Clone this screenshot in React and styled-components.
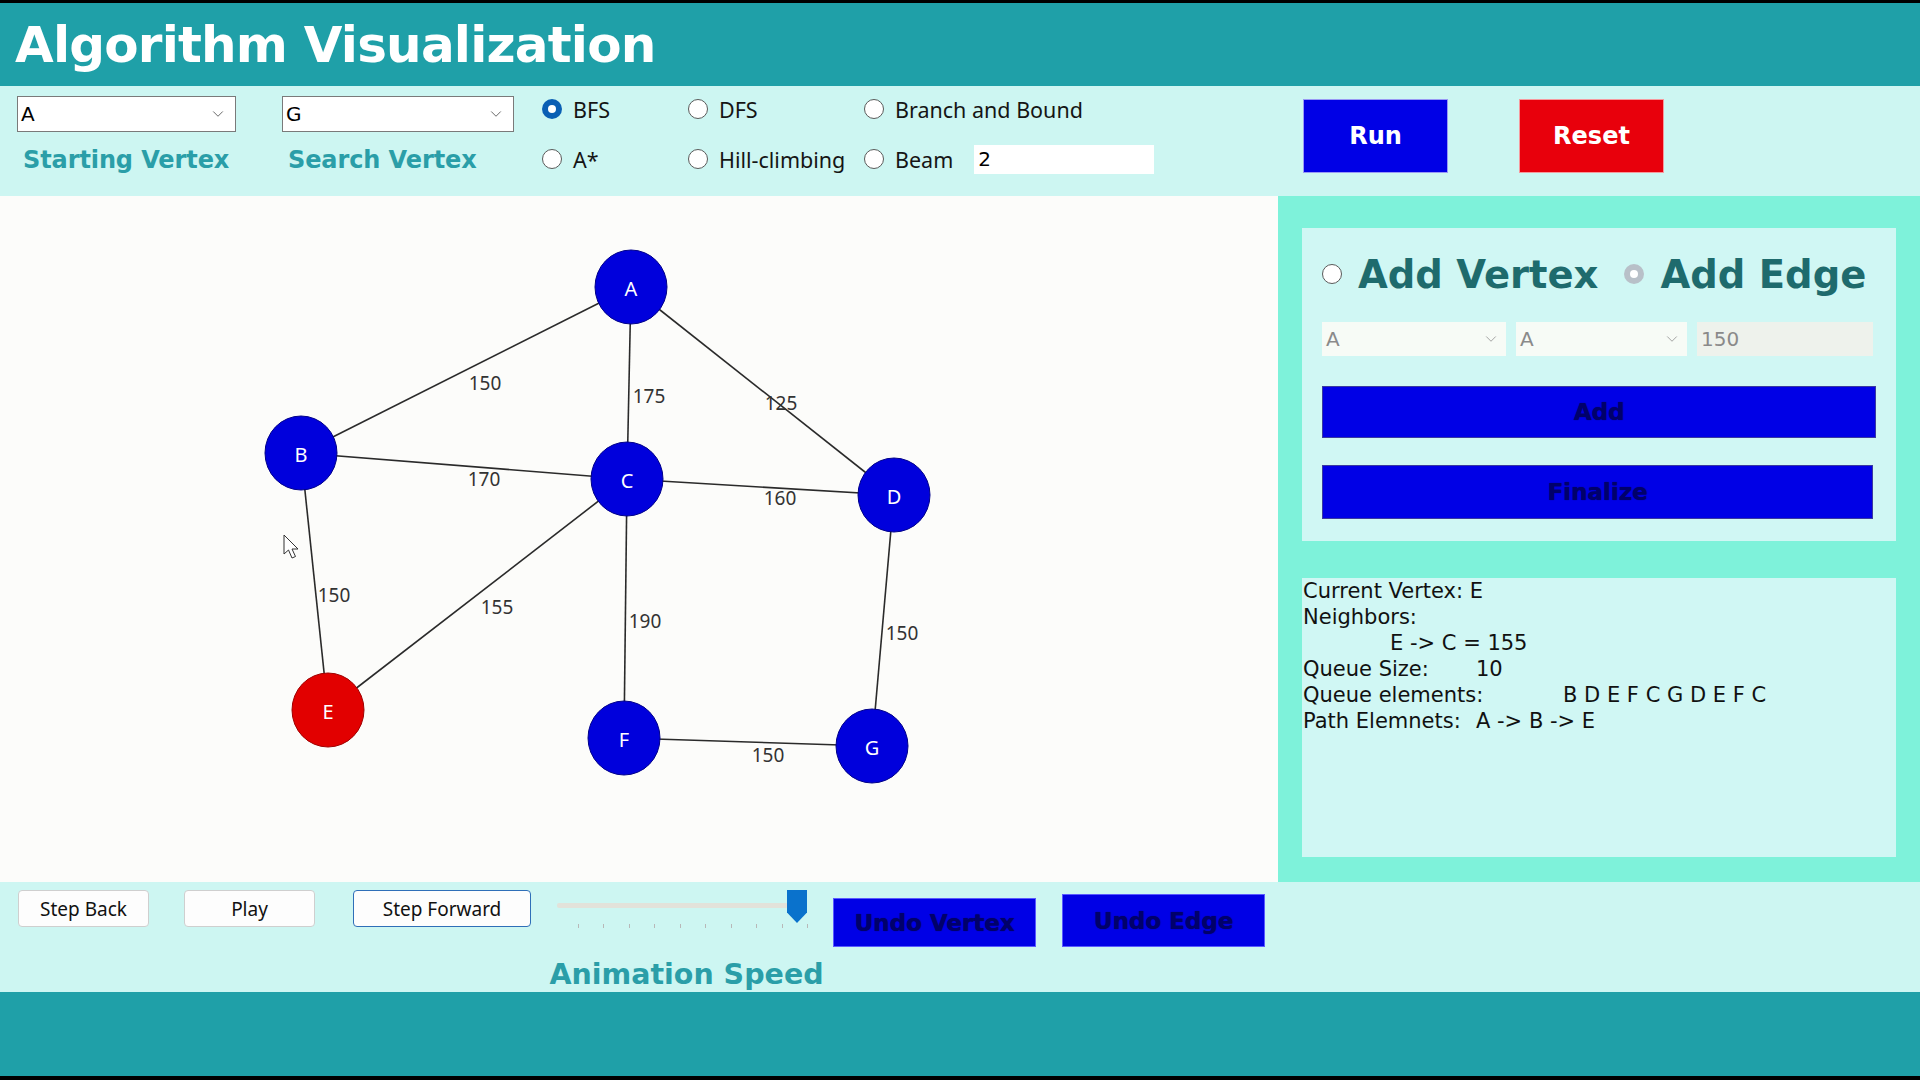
import React from "react";
import styled, { createGlobalStyle } from "styled-components";
import { ChevronDown } from "lucide-react";

const GlobalStyle = createGlobalStyle`
  html, body {
    margin: 0;
    padding: 0;
    background: #000;
  }
  * { box-sizing: border-box; }
`;

const nodes = {
  A: { x: 631, y: 91 },
  B: { x: 301, y: 257 },
  C: { x: 627, y: 283 },
  D: { x: 894, y: 299 },
  E: { x: 328, y: 514, current: true },
  F: { x: 624, y: 542 },
  G: { x: 872, y: 550 },
};

const edges = [
  { from: "A", to: "B", w: 150, lx: 485, ly: 187 },
  { from: "A", to: "C", w: 175, lx: 649, ly: 200 },
  { from: "A", to: "D", w: 125, lx: 781, ly: 207 },
  { from: "B", to: "C", w: 170, lx: 484, ly: 283 },
  { from: "C", to: "D", w: 160, lx: 780, ly: 302 },
  { from: "B", to: "E", w: 150, lx: 334, ly: 399 },
  { from: "C", to: "E", w: 155, lx: 497, ly: 411 },
  { from: "C", to: "F", w: 190, lx: 645, ly: 425 },
  { from: "D", to: "G", w: 150, lx: 902, ly: 437 },
  { from: "F", to: "G", w: 150, lx: 768, ly: 559 },
];

const App = () => {
  return <Window>
      <GlobalStyle />
      <Header>
        <Title>Algorithm Visualization</Title>
      </Header>

      <ControlBar>
        <VertexField $width={219} $gap={46}>
          <SelectBox>
            A
            <ChevronDown size={18} strokeWidth={1.3} color="#666" />
          </SelectBox>
          <FieldLabel>Starting Vertex</FieldLabel>
        </VertexField>
        <VertexField $width={232} $gap={28}>
          <SelectBox>
            G
            <ChevronDown size={18} strokeWidth={1.3} color="#666" />
          </SelectBox>
          <FieldLabel>Search Vertex</FieldLabel>
        </VertexField>

        <AlgoGrid>
          <RadioOption><RadioDot $checked />BFS</RadioOption>
          <RadioOption><RadioDot />DFS</RadioOption>
          <RadioOption><RadioDot />Branch and Bound</RadioOption>
          <RadioOption><RadioDot />A*</RadioOption>
          <RadioOption><RadioDot />Hill-climbing</RadioOption>
          <RadioOption>
            <RadioDot />Beam
            <BeamInput defaultValue="2" />
          </RadioOption>
        </AlgoGrid>

        <ActionButton $color="#0000e6" $gap={148}>Run</ActionButton>
        <ActionButton $color="#e8000c" $gap={71}>Reset</ActionButton>
      </ControlBar>

      <Main>
        <Canvas>
          <svg width="1278" height="686">
            {edges.map(e => <line key={e.from + e.to} x1={nodes[e.from].x} y1={nodes[e.from].y} x2={nodes[e.to].x} y2={nodes[e.to].y} stroke="#2a2a2a" strokeWidth="1.6" />)}
            {edges.map(e => <EdgeLabel key={"l" + e.from + e.to} x={e.lx} y={e.ly} textAnchor="middle" dominantBaseline="central">
                {e.w}
              </EdgeLabel>)}
            {Object.entries(nodes).map(([name, n]) => <g key={name}>
                <ellipse cx={n.x} cy={n.y} rx="36" ry="37" fill={n.current ? "#e20000" : "#0000dc"} stroke={n.current ? "#a00000" : "#00008a"} strokeWidth="1" />
                <NodeText x={n.x} y={n.y + 1} textAnchor="middle" dominantBaseline="central">
                  {name}
                </NodeText>
              </g>)}
            {/* mouse pointer left in the capture */}
            <path d="M284 339 L284 358 L288.5 354 L292 362 L295.5 360.5 L292 353 L298 353 Z" fill="#fff" stroke="#333" strokeWidth="1" strokeLinejoin="round" />
          </svg>
        </Canvas>

        <SidePanel>
          <EditBox>
            <ModeRow>
              <ModeOption>
                <RadioDot />
                Add Vertex
              </ModeOption>
              <ModeOption>
                <RadioDot $muted />
                Add Edge
              </ModeOption>
            </ModeRow>
            <EdgeRow>
              <DisabledSelect $width={184}>
                A
                <ChevronDown size={18} strokeWidth={1.2} color="#9a9a9a" />
              </DisabledSelect>
              <DisabledSelect $width={171}>
                A
                <ChevronDown size={18} strokeWidth={1.2} color="#9a9a9a" />
              </DisabledSelect>
              <WeightInput>150</WeightInput>
            </EdgeRow>
            <WideButton $width={554} $height={52} $top={30}>Add</WideButton>
            <WideButton $width={551} $height={54} $top={27}>Finalize</WideButton>
          </EditBox>

          <InfoBox>
            <InfoLine>Current Vertex: E</InfoLine>
            <InfoLine>Neighbors:</InfoLine>
            <InfoLine><InfoLabel $width={87} />E -&gt; C = 155</InfoLine>
            <InfoLine><InfoLabel $width={173}>Queue Size:</InfoLabel>10</InfoLine>
            <InfoLine><InfoLabel $width={260}>Queue elements:</InfoLabel>B D E F C G D E F C</InfoLine>
            <InfoLine><InfoLabel $width={173}>Path Elemnets:</InfoLabel>A -&gt; B -&gt; E</InfoLine>
          </InfoBox>
        </SidePanel>
      </Main>

      <BottomBar>
        <StepButton $width={131}>Step Back</StepButton>
        <StepButton $width={131} $gap={35}>Play</StepButton>
        <StepButton $width={178} $gap={38} $focused>Step Forward</StepButton>

        <SpeedGroup>
          <Slider>
            <SliderTrack />
            <SliderThumb />
          </Slider>
          <Ticks>
            {Array.from({ length: 10 }).map((_, i) => <Tick key={i} />)}
          </Ticks>
          <SpeedLabel>Animation Speed</SpeedLabel>
        </SpeedGroup>

        <UndoButton $gap={25} $top={8} $height={49}>Undo Vertex</UndoButton>
        <UndoButton $gap={26} $top={4} $height={53}>Undo Edge</UndoButton>
      </BottomBar>

      <Footer />
    </Window>;
};

/*
==== Component Styles ====
*/

const Window = styled.div`
  width: 1920px;
  height: 1080px;
  padding: 3px 0 4px;
  display: flex;
  flex-direction: column;
  background: #000;
  overflow: hidden;
`;

const Header = styled.header`
  height: 83px;
  flex-shrink: 0;
  display: flex;
  align-items: center;
  padding-left: 15px;
  background: #1fa0a8;
`;

const Title = styled.h1`
  margin: 0;
  color: #fff;
  font-family: "DejaVu Sans", Verdana, sans-serif;
  font-weight: bold;
  font-size: 50px;
  letter-spacing: -0.8px;
`;

const ControlBar = styled.div`
  height: 110px;
  flex-shrink: 0;
  display: flex;
  align-items: flex-start;
  padding: 10px 0 0 17px;
  background: #cdf6f2;
`;

const VertexField = styled.div`
  width: ${p => p.$width}px;
  margin-right: ${p => p.$gap}px;
  display: flex;
  flex-direction: column;
`;

const SelectBox = styled.div`
  height: 36px;
  display: flex;
  align-items: center;
  justify-content: space-between;
  padding: 0 8px 0 3px;
  border: 1px solid #7a7a7a;
  background: #fff;
  font-family: "DejaVu Sans", sans-serif;
  font-size: 20px;
  color: #000;
`;

const FieldLabel = styled.div`
  margin-top: 14px;
  padding-left: 6px;
  font-family: "DejaVu Sans", sans-serif;
  font-weight: bold;
  font-size: 24px;
  letter-spacing: -0.1px;
  color: #2a9ea8;
  white-space: nowrap;
`;

const AlgoGrid = styled.div`
  display: grid;
  grid-template-columns: 146px 176px 291px;
  grid-template-rows: 30px 30px;
  row-gap: 20px;
  margin-top: -2px;
`;

const RadioOption = styled.label`
  display: flex;
  align-items: center;
  gap: 11px;
  font-family: "Noto Sans", "Open Sans", sans-serif;
  font-size: 21.5px;
  color: #151515;
  white-space: nowrap;
`;

const RadioDot = styled.span`
  width: 20px;
  height: 20px;
  flex-shrink: 0;
  border-radius: 50%;
  position: relative;
  background: ${p => (p.$checked ? "#0a5fb4" : p.$muted ? "#b8c0c8" : "#fff")};
  border: ${p => (p.$checked || p.$muted ? "none" : "1.5px solid #5a5a5a")};

  &::after {
    content: "";
    display: ${p => (p.$checked || p.$muted ? "block" : "none")};
    position: absolute;
    left: 6px;
    top: 6px;
    width: 8px;
    height: 8px;
    border-radius: 50%;
    background: #fff;
  }
`;

const BeamInput = styled.input`
  width: 180px;
  height: 29px;
  margin-left: 10px;
  border: none;
  outline: none;
  padding: 0 4px;
  background: #fff;
  font-family: "DejaVu Sans", sans-serif;
  font-size: 20px;
  color: #000;
`;

const ActionButton = styled.button`
  width: 145px;
  height: 74px;
  margin: 3px 0 0 ${p => p.$gap}px;
  border: 1px solid rgba(255, 255, 255, 0.6);
  background: ${p => p.$color};
  color: #fff;
  font-family: "DejaVu Sans", sans-serif;
  font-weight: bold;
  font-size: 24px;
`;

const Main = styled.div`
  height: 686px;
  flex-shrink: 0;
  display: flex;
`;

const Canvas = styled.div`
  width: 1278px;
  flex-shrink: 0;
  background: #fcfcfa;

  svg {
    display: block;
  }
`;

const EdgeLabel = styled.text`
  font-family: "Noto Sans", "Open Sans", sans-serif;
  font-size: 19px;
  fill: #333;
`;

const NodeText = styled.text`
  font-family: "Noto Sans", "Open Sans", sans-serif;
  font-size: 20px;
  fill: #fff;
`;

const SidePanel = styled.div`
  flex: 1;
  display: flex;
  flex-direction: column;
  gap: 37px;
  padding: 32px 24px 25px;
  background: #7ef2da;
`;

const EditBox = styled.div`
  height: 313px;
  flex-shrink: 0;
  padding: 23px 20px 0;
  background: #d0f7f4;
`;

const ModeRow = styled.div`
  height: 46px;
  display: flex;
  align-items: center;
  gap: 26px;
`;

const ModeOption = styled.label`
  display: flex;
  align-items: center;
  gap: 16px;
  font-family: "DejaVu Sans", sans-serif;
  font-weight: bold;
  font-size: 38.5px;
  color: #1e6b6d;
  white-space: nowrap;
`;

const EdgeRow = styled.div`
  margin-top: 25px;
  display: flex;
  gap: 10px;
`;

const DisabledSelect = styled.div`
  width: ${p => p.$width}px;
  height: 34px;
  display: flex;
  align-items: center;
  justify-content: space-between;
  padding: 0 6px 0 4px;
  background: #f7fbf6;
  font-family: "DejaVu Sans", sans-serif;
  font-size: 20px;
  color: #8a8a8a;
`;

const WeightInput = styled.div`
  width: 176px;
  height: 34px;
  display: flex;
  align-items: center;
  padding-left: 4px;
  background: #eef2ec;
  font-family: "DejaVu Sans", sans-serif;
  font-size: 20px;
  color: #8a8a8a;
`;

const WideButton = styled.button`
  display: block;
  width: ${p => p.$width}px;
  height: ${p => p.$height}px;
  margin-top: ${p => p.$top}px;
  border: 1px solid #3a3aa0;
  background: #0000e6;
  color: #00006a;
  font-family: "DejaVu Sans", sans-serif;
  font-weight: bold;
  font-size: 23px;
  text-shadow: 0 0 1px #000060;
`;

const InfoBox = styled.div`
  flex: 1;
  padding: 0 1px;
  background: #d0f7f4;
  font-family: "DejaVu Sans", sans-serif;
  font-size: 21px;
  line-height: 26px;
  color: #111;
`;

const InfoLine = styled.div`
  display: flex;
  white-space: nowrap;
`;

const InfoLabel = styled.span`
  width: ${p => p.$width}px;
  flex-shrink: 0;
`;

const BottomBar = styled.div`
  height: 110px;
  flex-shrink: 0;
  display: flex;
  align-items: flex-start;
  padding: 8px 0 0 18px;
  background: #cdf6f2;
`;

const StepButton = styled.button`
  width: ${p => p.$width}px;
  height: 37px;
  margin-left: ${p => p.$gap || 0}px;
  border: ${p => (p.$focused ? "1.5px solid #2f6fb8" : "1px solid #cfcfcf")};
  border-radius: 4px;
  background: #fdfdfd;
  font-family: "Noto Sans", "Open Sans", sans-serif;
  font-size: 19px;
  color: #111;
`;

const SpeedGroup = styled.div`
  width: 251px;
  margin-left: 26px;
  display: flex;
  flex-direction: column;
  align-items: center;
`;

const Slider = styled.div`
  width: 100%;
  height: 34px;
  position: relative;
`;

const SliderTrack = styled.div`
  width: 231px;
  height: 5px;
  margin-top: 13px;
  background: #e2e2da;
  border-radius: 2px;
`;

const SliderThumb = styled.div`
  position: absolute;
  left: 230px;
  top: 0;
  width: 20px;
  height: 33px;
  background: #0a72cc;
  clip-path: polygon(0 0, 100% 0, 100% 68%, 50% 100%, 0 68%);
`;

const Ticks = styled.div`
  width: 230px;
  margin-left: 21px;
  display: flex;
  justify-content: space-between;
`;

const Tick = styled.span`
  width: 1px;
  height: 4px;
  background: #b8b8b8;
`;

const SpeedLabel = styled.div`
  margin-top: 30px;
  margin-left: 8px;
  font-family: "DejaVu Sans", sans-serif;
  font-weight: bold;
  font-size: 28.5px;
  color: #2a9ea8;
  white-space: nowrap;
`;

const UndoButton = styled.button`
  width: 203px;
  height: ${p => p.$height}px;
  margin: ${p => p.$top}px 0 0 ${p => p.$gap}px;
  border: 1px solid #5a5aff;
  background: #0000e6;
  color: #00006a;
  font-family: "DejaVu Sans", sans-serif;
  font-weight: bold;
  font-size: 23px;
  text-shadow: 0 0 1px #000060;
`;

const Footer = styled.footer`
  flex: 1;
  background: #1fa0a8;
`;

export default App;
